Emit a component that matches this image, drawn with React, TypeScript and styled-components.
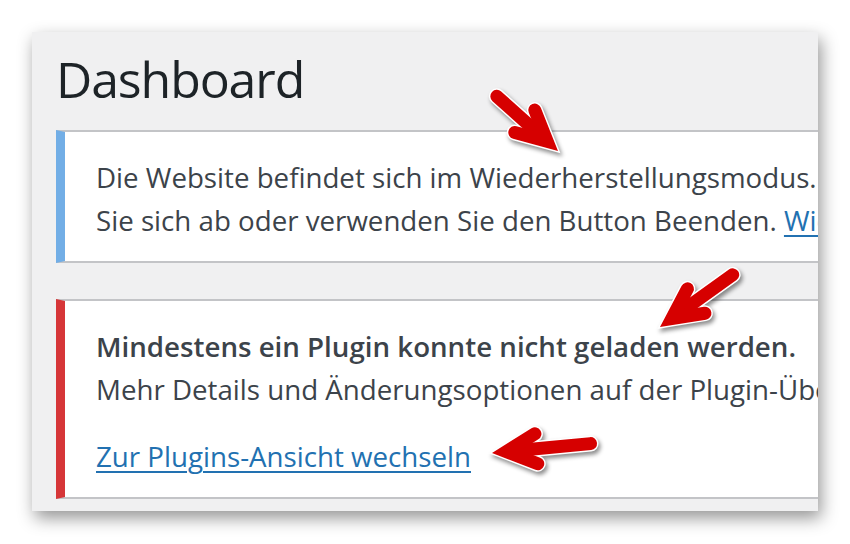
import styled, { createGlobalStyle } from "styled-components";

const GlobalStyle = createGlobalStyle`
  html, body {
    margin: 0;
    padding: 0;
    background: #ffffff;
  }
  body {
    font-family: "Open Sans", "Noto Sans", "DejaVu Sans", sans-serif;
  }
`;

type Pt = [number, number];

interface ArrowProps {
  tail: Pt;
  tip: Pt;
  len?: number;
  half?: number;
  w?: number;
}

// red marker arrow with white rim, drawn in page coordinates
function Arrow({ tail, tip, len = 30, half = 15, w = 13 }: ArrowProps) {
  const dx = tip[0] - tail[0];
  const dy = tip[1] - tail[1];
  const l = Math.hypot(dx, dy);
  const d: Pt = [dx / l, dy / l];
  const n: Pt = [-d[1], d[0]];
  const k = w / 2 / Math.sin(Math.atan(half / len));
  const p: Pt = [tip[0] - d[0] * k, tip[1] - d[1] * k];
  const b1: Pt = [p[0] - d[0] * len + n[0] * half, p[1] - d[1] * len + n[1] * half];
  const b2: Pt = [p[0] - d[0] * len - n[0] * half, p[1] - d[1] * len - n[1] * half];
  const t: Pt = [tail[0] + d[0] * (w / 2), tail[1] + d[1] * (w / 2)];
  const s: Pt = [p[0] - d[0] * 6, p[1] - d[1] * 6];
  const head = `M${b1[0]} ${b1[1]} L${p[0]} ${p[1]} L${b2[0]} ${b2[1]}`;
  const shaft = `M${t[0]} ${t[1]} L${s[0]} ${s[1]}`;
  return (
    <g style={{ filter: "drop-shadow(2px 3px 2px rgba(0,0,0,0.45))" }}>
      <path d={shaft} stroke="#fff" strokeWidth={w + 3} strokeLinecap="round" fill="none" />
      <path d={head} stroke="#fff" strokeWidth={w + 3} strokeLinecap="round" strokeLinejoin="miter" fill="none" />
      <path d={shaft} stroke="#d60000" strokeWidth={w} strokeLinecap="round" fill="none" />
      <path d={head} stroke="#d60000" strokeWidth={w} strokeLinecap="round" strokeLinejoin="miter" fill="none" />
    </g>
  );
}

export default function App() {
  return (
    <>
      <GlobalStyle />
      <Page>
        <Panel>
          <Title>Dashboard</Title>
          <Notice $accent="#72aee6">
            <Line>
              Die Website befindet sich im Wiederherstellungsmodus. Um den Modus zu verlassen, melden
            </Line>
            <Line>
              Sie sich ab oder verwenden Sie den Button Beenden. <Link href="#">Wiederherstellungsmodus beenden</Link>
            </Line>
          </Notice>
          <Notice $accent="#d63638" $gap>
            <Line>
              <Strong>Mindestens ein Plugin konnte nicht geladen werden.</Strong>
            </Line>
            <Line>Mehr Details und Änderungsoptionen auf der Plugin-Übersichtsseite.</Line>
            <LinkLine>
              <Link href="#">Zur Plugins-Ansicht wechseln</Link>
            </LinkLine>
          </Notice>
        </Panel>
        <Overlay viewBox="0 0 850 544" width="850" height="544">
          <Arrow tail={[492, 92]} tip={[558, 151]} />
          <Arrow tail={[738, 271]} tip={[660, 327]} />
          <Arrow tail={[597, 443]} tip={[492, 453]} />
        </Overlay>
      </Page>
    </>
  );
}

const Page = styled.div`
  position: relative;
  width: 850px;
  height: 544px;
  padding: 32px 0 0 32px;
  box-sizing: border-box;
  overflow: hidden;
`;

const Panel = styled.div`
  width: 786px;
  height: 479px;
  background: #f0f0f1;
  overflow: hidden;
  box-sizing: border-box;
  padding: 14px 0 0 24px;
  box-shadow: 3px 7px 16px rgba(0, 0, 0, 0.42);
`;

const Title = styled.h1`
  margin: 0 0 18px 0;
  font-size: 50px;
  letter-spacing: -1.1px;
  line-height: 66px;
  font-weight: 400;
  color: #1d2327;
  white-space: nowrap;
`;

const Notice = styled.div<{ $accent: string; $gap?: boolean }>`
  width: 1200px;
  box-sizing: border-box;
  background: #ffffff;
  border: 2px solid #c3c4c7;
  border-left: 9px solid ${(p) => p.$accent};
  padding: 24px 31px 19px;
  margin-top: ${(p) => (p.$gap ? "36px" : "0")};
  color: #3c434a;
  font-size: 27.7px;
  line-height: 43px;
`;

const Line = styled.p`
  margin: 0;
  white-space: nowrap;
`;

const Strong = styled.strong`
  font-weight: 600;
`;

const LinkLine = styled(Line)`
  margin-top: 24px;
`;

const Link = styled.a`
  color: #2271b1;
  text-decoration: underline;
  text-underline-offset: 4px;
  text-decoration-thickness: 2px;
`;

const Overlay = styled.svg`
  position: absolute;
  left: 0;
  top: 0;
  pointer-events: none;
`;
